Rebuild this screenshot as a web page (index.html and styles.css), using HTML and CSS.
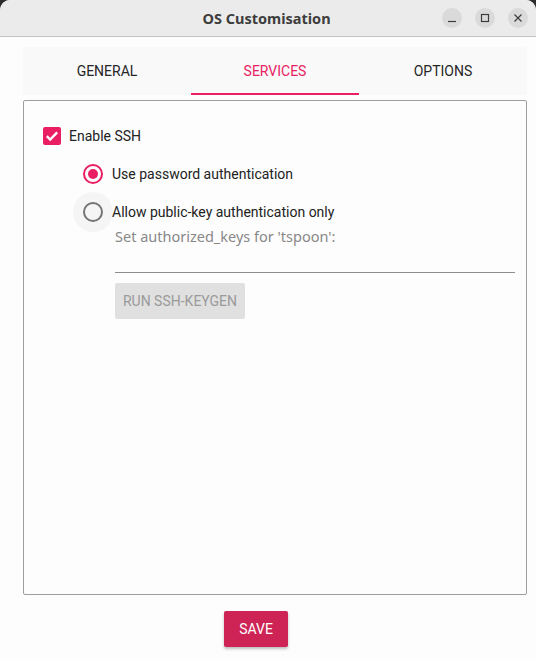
FILE: index.html
```html
<!DOCTYPE html>
<html>
<head>
<meta charset="utf-8">
<link rel="stylesheet" href="styles.css">
</head>
<body>
<div class="window">
  <header class="titlebar">
    <span class="title">OS Customisation</span>
    <div class="controls">
      <span class="ctl"><svg width="10" height="10" viewBox="0 0 10 10"><path d="M1 8.5h8" stroke="#3d3d3d" stroke-width="1.2"/></svg></span>
      <span class="ctl"><svg width="10" height="10" viewBox="0 0 10 10"><rect x="1.5" y="1.5" width="7" height="7" fill="none" stroke="#3d3d3d" stroke-width="1.2"/></svg></span>
      <span class="ctl"><svg width="10" height="10" viewBox="0 0 10 10"><path d="M1.5 1.5l7 7M8.5 1.5l-7 7" stroke="#3d3d3d" stroke-width="1.2"/></svg></span>
    </div>
  </header>
  <main class="content">
    <nav class="tabs">
      <div class="tab">GENERAL</div>
      <div class="tab active">SERVICES</div>
      <div class="tab">OPTIONS</div>
    </nav>
    <section class="panel">
      <label class="check-row">
        <span class="checkbox"><svg width="18" height="18" viewBox="0 0 18 18"><path d="M3.8 9.2l3.4 3.3L14.2 5.4" fill="none" stroke="#fff" stroke-width="2.4"/></svg></span>
        <span>Enable SSH</span>
      </label>
      <div class="options">
        <label class="radio-row">
          <span class="radio-wrap"><span class="radio checked"></span></span>
          <span>Use password authentication</span>
        </label>
        <label class="radio-row">
          <span class="radio-wrap hover"><span class="radio"></span></span>
          <span>Allow public-key authentication only</span>
        </label>
        <div class="keys">
          <div class="keys-label">Set authorized_keys for 'tspoon':</div>
          <div class="field"></div>
          <button class="keygen">RUN SSH-KEYGEN</button>
        </div>
      </div>
    </section>
    <div class="footer">
      <button class="save">SAVE</button>
    </div>
  </main>
</div>
</body>
</html>
```
FILE: styles.css
```css
html {
  background: #2c2c2c;
}
body {
  margin: 0;
  font-family: Roboto, "Liberation Sans", sans-serif;
}
.window {
  width: 536px;
  height: 659px;
  background: #fdfdfd;
  border-radius: 10px 10px 0 0;
  overflow: hidden;
}
.titlebar {
  position: relative;
  height: 36px;
  background: #ebebeb;
  border-bottom: 1px solid #c4c4c4;
  display: flex;
  align-items: center;
  justify-content: center;
}
.title {
  font-family: "Noto Sans", sans-serif;
  font-weight: 700;
  font-size: 14.5px;
  color: #3d3d3d;
  margin-left: -3px;
}
.controls {
  position: absolute;
  right: 8px;
  top: 8px;
  display: flex;
  gap: 13px;
}
.ctl {
  width: 20px;
  height: 20px;
  border-radius: 50%;
  background: #dadada;
  display: flex;
  align-items: center;
  justify-content: center;
}
.content {
  padding: 10px 9px 0 23px;
}
.tabs {
  display: grid;
  grid-template-columns: repeat(3, 1fr);
  height: 48px;
  background: #f9f9f9;
}
.tab {
  display: flex;
  align-items: center;
  justify-content: center;
  font-size: 14px;
  color: #262626;
  padding-bottom: 1px;
  box-sizing: border-box;
}
.tab.active {
  color: #e91e63;
  border-bottom: 2px solid #e91e63;
  padding-bottom: 0;
  padding-top: 1px;
  height: 47px;
  margin-top: 1px;
}
.panel {
  margin-top: 5px;
  height: 467px;
  border: 1px solid #9e9e9e;
  border-radius: 2px;
  padding: 26px 0 0 19px;
  box-sizing: content-box;
}
.check-row {
  display: flex;
  align-items: center;
  gap: 8px;
  font-size: 14px;
  color: #222;
}
.checkbox {
  width: 18px;
  height: 18px;
  border-radius: 2px;
  background: #e91e63;
  display: flex;
}
.options {
  padding-left: 30px;
  margin-top: 10px;
}
.radio-row {
  display: flex;
  align-items: center;
  height: 38px;
  font-size: 14px;
  color: #222;
}
.radio-wrap {
  width: 40px;
  height: 40px;
  border-radius: 50%;
  display: flex;
  align-items: center;
  justify-content: center;
  flex-shrink: 0;
  margin-right: -1px;
}
.radio-wrap.hover {
  background: #f5f5f5;
}
.radio {
  width: 16px;
  height: 16px;
  border: 2px solid #757575;
  border-radius: 50%;
  position: relative;
}
.radio.checked {
  border-color: #e91e63;
}
.radio.checked::after {
  content: "";
  position: absolute;
  left: 3px;
  top: 3px;
  width: 10px;
  height: 10px;
  border-radius: 50%;
  background: #e91e63;
}
.keys {
  padding-left: 42px;
  padding-right: 11px;
}
.keys-label {
  font-family: "Noto Sans", sans-serif;
  font-size: 14.5px;
  color: #888;
  margin-top: -3px;
  line-height: 16px;
}
.field {
  height: 28px;
  border-bottom: 1px solid #8c8c8c;
}
.keygen {
  margin-top: 10px;
  width: 130px;
  height: 36px;
  border: none;
  border-radius: 2px;
  background: #e0e0e0;
  color: #9a9a9a;
  font-family: Roboto, sans-serif;
  font-size: 14px;
  padding: 0;
}
.footer {
  padding-left: 201px;
  margin-top: 16px;
}
.save {
  width: 64px;
  height: 36px;
  border: none;
  border-radius: 2px;
  background: #cd2355;
  color: #fff;
  font-family: Roboto, sans-serif;
  font-size: 14px;
  padding: 0;
  box-shadow: 0 2px 3px rgba(0,0,0,0.25);
}
```
